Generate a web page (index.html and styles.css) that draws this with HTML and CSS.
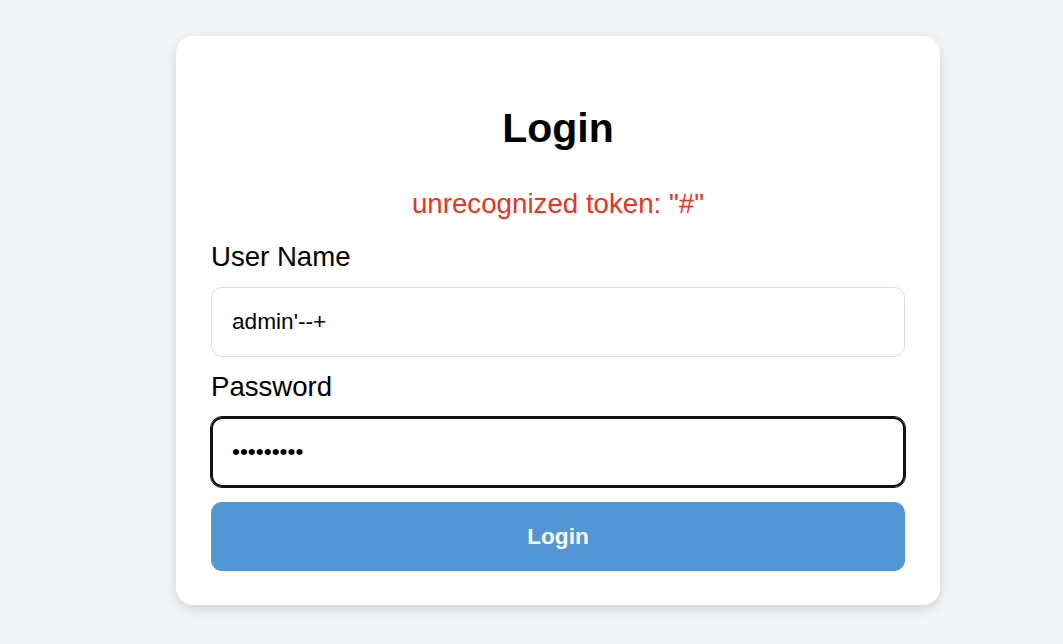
FILE: index.html
```html
<!DOCTYPE html>
<html lang="en">
<head>
<meta charset="utf-8">
<title>Login</title>
<link rel="stylesheet" href="styles.css">
</head>
<body>
<main class="page">
  <div class="card">
    <h1 class="title">Login</h1>
    <form class="form">
      <p class="error">unrecognized token: "#"</p>
      <label class="label" for="username">User Name</label>
      <input class="field" id="username" type="text" value="admin'--+">
      <label class="label" for="password">Password</label>
      <input class="field field-active" id="password" type="password" value="123456789">
      <button class="btn" type="button">Login</button>
    </form>
  </div>
</main>
</body>
</html>
```

FILE: styles.css
```css
html, body {
  margin: 0;
  padding: 0;
  background: #f3f4f8;
  font-family: "Liberation Sans", Arial, sans-serif;
}

.page {
  padding: 36px 0 0 176px;
  min-height: 608px;
}

.card {
  width: 764px;
  box-sizing: border-box;
  padding: 35px 35px 34px 35px;
  background: #ffffff;
  border-radius: 17px;
  box-shadow: 0 4px 12px rgba(0, 0, 0, 0.14);
}

.title {
  margin: 34px 0 36px;
  font-size: 41px;
  line-height: 47px;
  font-weight: 700;
  text-align: center;
  color: #000;
}

.form {
  display: flex;
  flex-direction: column;
  gap: 14.6px;
}

.error {
  margin: 0 0 6.5px;
  font-size: 27.7px;
  line-height: 32px;
  color: #ee3320;
  text-align: center;
}

.label {
  font-size: 27.6px;
  line-height: 31px;
  color: #000;
}

.field {
  display: block;
  box-sizing: border-box;
  width: 100%;
  height: 70px;
  margin: 0;
  padding: 0 20px;
  border: 1px solid #dcdcdc;
  border-radius: 11px;
  background: #fff;
  font-family: "Liberation Sans", Arial, sans-serif;
  font-size: 22.67px;
  color: #000;
  outline: none;
}

.field-active {
  border: 2px solid #111;
  padding: 0 19px;
  outline: 1px solid #111;
  outline-offset: 0;
}

.btn {
  display: block;
  width: 100%;
  height: 69px;
  margin: 1px 0 0;
  border: none;
  border-radius: 11px;
  background: #5296d6;
  color: #fff;
  font-family: "Liberation Sans", Arial, sans-serif;
  font-size: 22.67px;
  font-weight: 700;
  cursor: pointer;
}
```
